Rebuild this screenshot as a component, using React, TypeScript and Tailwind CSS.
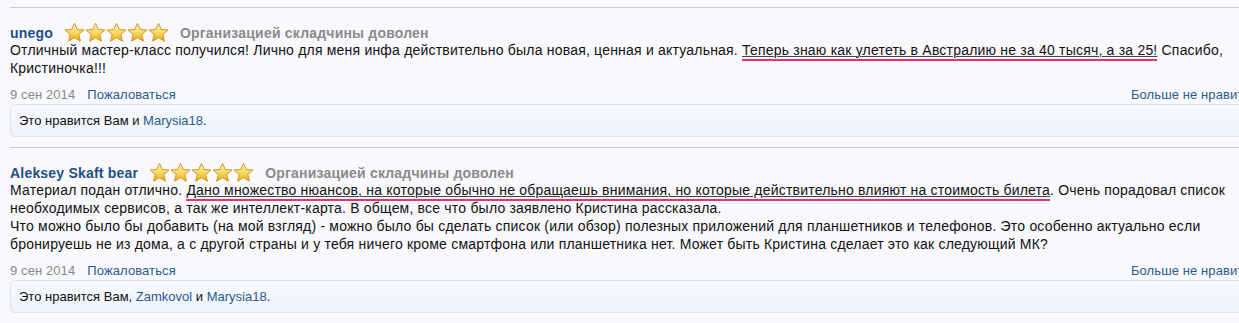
type Comment = {
  id: number
  user: string
  date: string
  likes: string[]
  body: React.ReactNode
}

function Star({ id }: { id: string }) {
  return (
    <svg width="21" height="21" viewBox="0 0 20 20" className="shrink-0">
      <defs>
        <linearGradient id={id} x1="0" y1="0" x2="0" y2="1">
          <stop offset="0" stopColor="#fff8c8" />
          <stop offset="0.55" stopColor="#f7d75a" />
          <stop offset="1" stopColor="#e9a917" />
        </linearGradient>
      </defs>
      <path
        d="M10 1.2 L12.6 7.1 L19 7.6 L14.1 11.8 L15.6 18.3 L10 14.9 L4.4 18.3 L5.9 11.8 L1 7.6 L7.4 7.1 Z"
        fill={`url(#${id})`}
        stroke="#d1921a"
        strokeWidth="0.9"
        strokeLinejoin="round"
      />
    </svg>
  )
}

function Marked({ children }: { children: React.ReactNode }) {
  return (
    <span className="border-b-2 border-[#e8336b] pb-[1px] underline decoration-[#444] decoration-1 underline-offset-[1px]">
      {children}
    </span>
  )
}

const comments: Comment[] = [
  {
    id: 1,
    user: "unego",
    date: "9 сен 2014",
    likes: ["Marysia18"],
    body: (
      <>
        Отличный мастер-класс получился! Лично для меня инфа действительно была новая, ценная и
        актуальная. <Marked>Теперь знаю как улететь в Австралию не за 40 тысяч, а за 25!</Marked>{" "}
        Спасибо, Кристиночка!!!
      </>
    ),
  },
  {
    id: 2,
    user: "Aleksey Skaft bear",
    date: "9 сен 2014",
    likes: ["Zamkovol", "Marysia18"],
    body: (
      <>
        Материал подан отлично.{" "}
        <Marked>
          Дано множество нюансов, на которые обычно не обращаешь внимания, но которые действительно
          влияют на стоимость билета
        </Marked>
        . Очень порадовал список необходимых сервисов, а так же интеллект-карта. В общем, все что
        было заявлено Кристина рассказала.
        <br />
        Что можно было бы добавить (на мой взгляд) - можно было бы сделать список (или обзор)
        полезных приложений для планшетников и телефонов. Это особенно актуально если бронируешь не
        из дома, а с другой страны и у тебя ничего кроме смартфона или планшетника нет. Может быть
        Кристина сделает это как следующий МК?
      </>
    ),
  },
]

function LikeLine({ likes }: { likes: string[] }) {
  return (
    <div className="flex h-[33px] items-center rounded-[5px] border border-[#d6e3f1] bg-gradient-to-b from-[#f6f9fd] to-[#eef4fb] pl-2 text-[13px] text-[#111]">
      {likes.length === 1 ? (
        <span>
          Это нравится Вам и <a className="text-[#2a5a8e]">{likes[0]}</a>.
        </span>
      ) : (
        <span>
          Это нравится Вам, <a className="text-[#2a5a8e]">{likes[0]}</a> и{" "}
          <a className="text-[#2a5a8e]">{likes[1]}</a>.
        </span>
      )}
    </div>
  )
}

export default function App() {
  return (
    <main className="h-[323px] w-[1239px] overflow-hidden bg-[#f9f9fd] pt-[7px] pl-[10px] font-['Liberation_Sans',Arial,sans-serif] leading-[18px] text-[#111]">
      <div className="w-[1247px]">
        {comments.map((c) => (
          <div key={c.id} className="border-t border-[#c3ccd8] pt-[16px] pb-[10px]">
            <div className="flex h-[17px] items-center text-[14px] tracking-[0.2px]">
              <span className="font-bold text-[#1f4e86]">{c.user}</span>
              <div className="ml-[11px] flex">
                {[0, 1, 2, 3, 4].map((i) => (
                  <Star key={i} id={`star-${c.id}-${i}`} />
                ))}
              </div>
              <span className="ml-[11px] font-bold text-[#8a8a8a]">
                Организацией складчины доволен
              </span>
            </div>
            <p className="pr-[12px] text-[14px] tracking-[0.2px]">{c.body}</p>
            <div className="mt-[9px] flex h-[18px] items-center justify-between text-[13px] tracking-[0.1px]">
              <div className="flex">
                <span className="text-[#888]">{c.date}</span>
                <a className="ml-[12px] text-[#2a5a8e]">Пожаловаться</a>
              </div>
              <a className="text-[#2a5a8e]">Больше не нравится</a>
            </div>
            <LikeLine likes={c.likes} />
          </div>
        ))}
      </div>
    </main>
  )
}
